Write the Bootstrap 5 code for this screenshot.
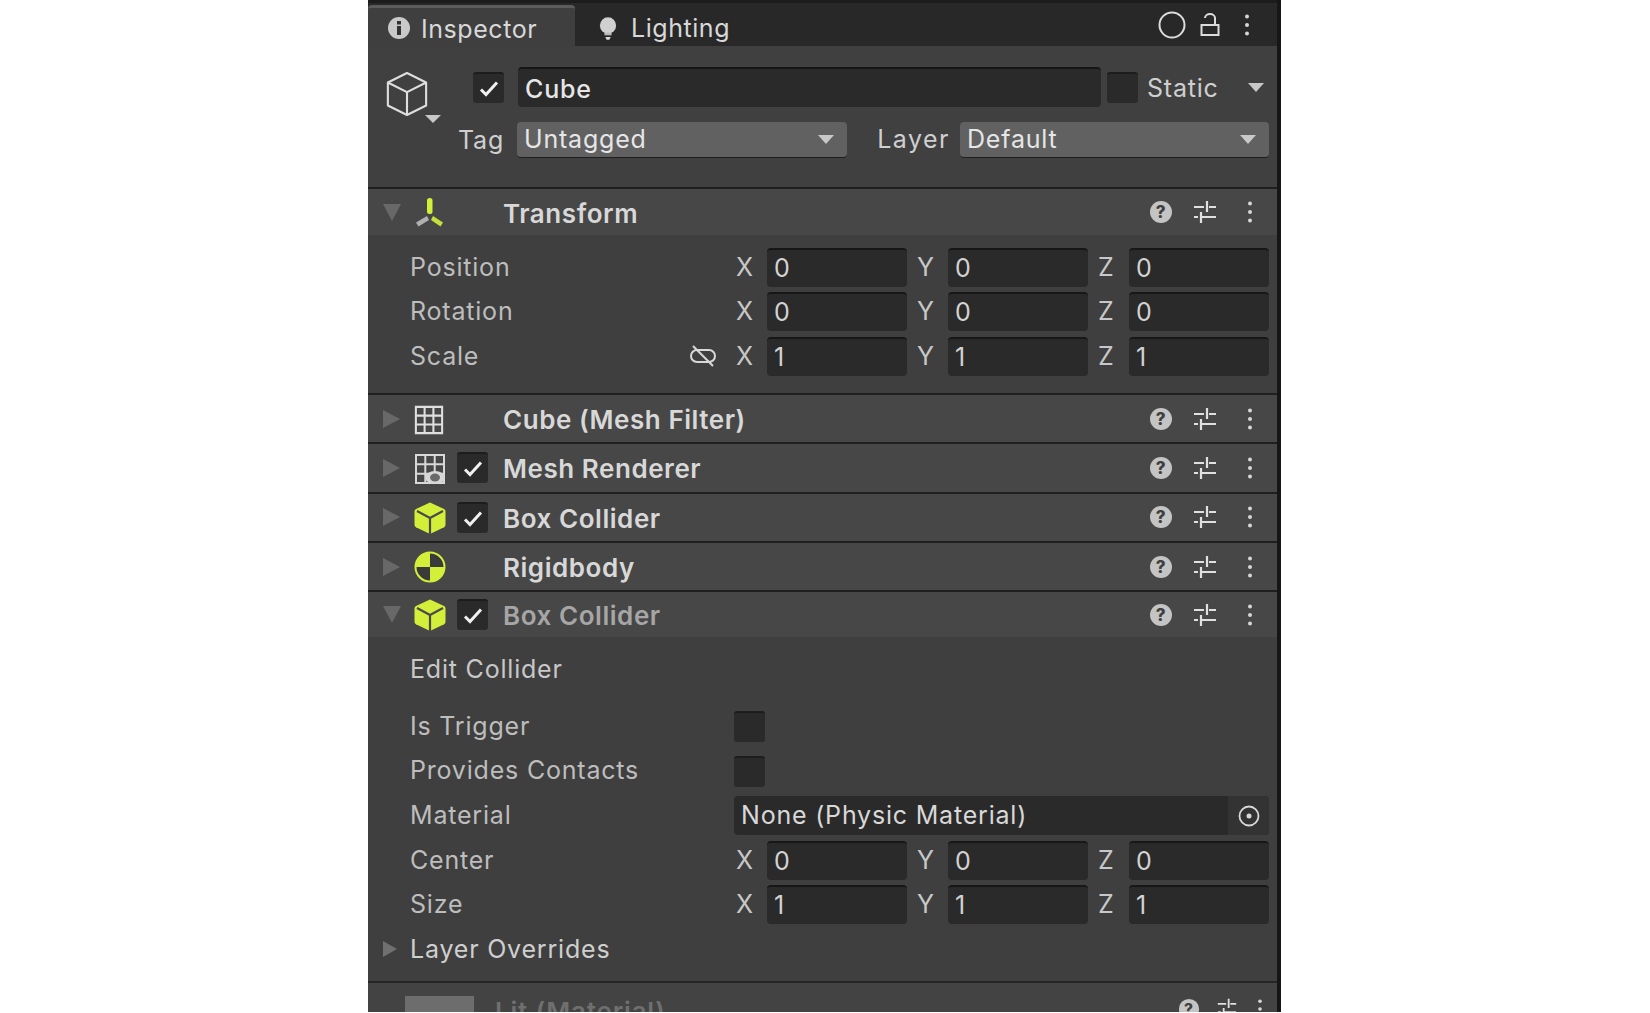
<!DOCTYPE html>
<html lang="en"><head><meta charset="utf-8"><title>Inspector</title>
<link href="https://cdn.jsdelivr.net/npm/bootstrap@5.3.0/dist/css/bootstrap.min.css" rel="stylesheet">
<style>
body{background:#fff;margin:0;overflow:hidden}
.ins-panel{width:913px;height:1012px;margin-left:368px;background:#3f3f3f;border-right:4px solid #161616;overflow:hidden;font-family:Inter,"Liberation Sans",sans-serif;font-size:25px;color:#cfcfcf;letter-spacing:.8px}
.tabbar{height:46px;background:#282828;border-top:3px solid #1c1c1c}
.tab-on{width:207px;height:43px;margin-top:2px;background:#3f3f3f;border-top:3px solid #5c5c5c;border-radius:4px 4px 0 0;padding-left:19px;gap:10px;color:#d8d8d8;letter-spacing:.55px}
.tab-on span{padding-top:4px}
.tab-off{padding-left:24px;padding-top:9px;gap:14px;color:#d8d8d8;letter-spacing:.55px}
.tabicons{margin-left:auto;gap:14px;padding-right:27px}
.dots-m{margin-left:10px}
.headbox{height:143px;background:#404040;border-bottom:2px solid #1e1e1e;padding-top:21px}
.top-line{height:40px}
.sec-line{height:36px;margin-top:15px}
.cubebox{width:105px;padding-left:17px;position:relative}
.cubebox svg{margin-top:14px}
.smalltri{position:absolute;left:57px;top:60px;width:0;height:0;border-left:8px solid transparent;border-right:8px solid transparent;border-top:8px solid #c8c8c8}
.chk{width:31px;height:31px;background:#2a2a2a;border-radius:3px;border-top:2px solid #1d1d1d;flex:none}
.namefield{width:583px;height:40px;margin-left:14px;background:#2a2a2a;border-top:2px solid #161616;border-radius:4px;padding:3px 0 0 7px;font-weight:500;color:#e6e6e6}
.statlabel{padding-top:3px;margin-left:9px}
.statchk{margin-left:6px}
.stat-tri{margin-right:13px}
.dropf{height:36px;background:#616161;border-bottom:1px solid #1e1e1e;border-radius:4px;padding:0 13px 0 7px;color:#e6e6e6}
.dw-tag{width:330px}
.dw-layer{width:309px;margin-left:10px;margin-right:8px}
.layerlbl{letter-spacing:1.500px}
.tri-d{width:0;height:0;border-left:8px solid transparent;border-right:8px solid transparent;border-top:9px solid #c8c8c8}
.tagwrap{width:149px;padding-left:90px;padding-top:2px}
.cmp{height:49.3px;background:#474747;border-bottom:2px solid #1f1f1f;font-weight:600;color:#d8d8d8;font-size:26px;letter-spacing:.55px}
.cmp>span{padding-top:2px}
.cmp-first{height:46px;border-bottom:0}
.cmp-last{height:45px;border-bottom:0}
.arrowcell{width:46px;padding-left:15px}
.tri-r{width:0;height:0;border-top:9px solid transparent;border-bottom:9px solid transparent;border-left:17px solid #686868}
.tri-o{width:0;height:0;border-left:9px solid transparent;border-right:9px solid transparent;border-top:17px solid #686868}
.iconcell{width:43px}
.iconcell svg{margin-bottom:3px}
.chkcell{width:46px}
.rt{margin-left:auto;width:128px;padding-right:24px}
.rt svg{flex:none}
.rt-help{margin-right:20px}
.rt-sl{margin-right:30px}
.dimtext{color:#a6a6a6}
.body-a{height:160px;padding-top:10px;border-bottom:2px solid #1f1f1f}
.frow{height:44.6px;padding-left:42px}
.flabel{width:324px;position:relative;color:#bdbdbd}
.vgroup{width:181px}
.axis{width:33px;padding-left:2px;color:#c8c8c8;font-weight:400}
.numf{width:140px;height:39px;background:#2a2a2a;border-top:2px solid #171717;border-radius:4px;padding-left:7px;color:#d2d2d2;flex:none}
.unlink{position:absolute;right:17px;top:50%;margin-top:-11px}
.editrow{height:44px;margin-top:11px;padding-left:42px;color:#c8c8c8}
.gap-rows{padding-top:12px}
.objf{width:535px;height:39px;background:#2a2a2a;border-radius:4px;padding-left:7px;color:#d8d8d8}
.pickbox{margin-left:auto;width:41px;height:39px;background:#333;border-radius:0 4px 4px 0}
.overrow{height:44.6px;padding-left:15px;color:#cfcfcf;gap:13px}
.tri-r2{width:0;height:0;border-top:8px solid transparent;border-bottom:8px solid transparent;border-left:14px solid #707070}
.sep-end{height:2px;background:#262626;margin-top:9px}
.litrow{height:32px;background:#434343;color:#6f6f6f;overflow:hidden}
.litthumb{width:69px;height:32px;background:#6d6d6d;margin:13px 0 0 37px}
.littxt{margin-left:21px;font-weight:600;font-size:26px;padding-top:16px;line-height:1}
.litic{margin-left:auto;padding:15px 14px 0 0}
.lit-help{margin-right:17px}
.lit-sl{margin-right:20px}
</style></head>
<body>
<svg width="0" height="0" class="d-block position-absolute">
<defs>
<symbol id="i-help" viewBox="0 0 24 24"><circle cx="12" cy="12" r="11" fill="#c4c4c4"/><text x="12" y="18" text-anchor="middle" font-family="Inter,sans-serif" font-weight="800" font-size="17" fill="#3f3f3f">?</text></symbol>
<symbol id="i-sl" viewBox="0 0 24 24"><g stroke="#e0e0e0" stroke-width="2.200" fill="none"><path d="M1 7h10M16 7h7M14 1v11M1 17h4M9 17h14M8 12v11"/></g></symbol>
<symbol id="i-dots" viewBox="0 0 6 24"><circle cx="3" cy="3.500" r="2" fill="#d6d6d6"/><circle cx="3" cy="12" r="2" fill="#d6d6d6"/><circle cx="3" cy="20.500" r="2" fill="#d6d6d6"/></symbol>
<symbol id="i-check" viewBox="0 0 31 31"><path d="M8 16.500l5 5L24 9.500" fill="none" stroke="#f0f0f0" stroke-width="3"/></symbol>
<symbol id="i-grid" viewBox="0 0 32 32"><path d="M2 2h28v28H2zM2 11.300h28M2 20.700h28M11.300 2v28M20.700 2v28" fill="none" stroke="#e0e0e0" stroke-width="2.200"/></symbol>
<symbol id="i-box" viewBox="0 0 32 32"><path d="M16 0.500L30 7q1.500 .7 1.500 2.500V23q0 1.500-1.500 2.300L16 32 2 25.300Q.5 24.500 .5 23V9.500Q.5 7.700 2 7z" fill="#d4ef3a"/><path d="M16 16L3 9M16 16l13-7M16 16v16" stroke="#4a4a4a" stroke-width="2.200" fill="none"/></symbol>
<symbol id="i-rb" viewBox="0 0 32 32"><circle cx="16" cy="16" r="14.500" fill="#3a3a3a" stroke="#d4ef3a" stroke-width="2"/><path d="M16 16V1.500A14.500 14.500 0 0 0 1.500 16zM16 16h14.500A14.500 14.500 0 0 1 16 30.500z" fill="#d4ef3a"/></symbol>
</defs></svg>

<div class="ins-panel">
  <div class="tabbar d-flex">
    <div class="tab-on d-flex align-items-center">
      <svg width="24" height="24" viewBox="0 0 24 24"><circle cx="12" cy="12" r="11" fill="#c9c9c9"/><rect x="10" y="10" width="4" height="9" fill="#333"/><rect x="10" y="5" width="4" height="3.500" fill="#333"/></svg>
      <span>Inspector</span>
    </div>
    <div class="tab-off d-flex align-items-center">
      <svg width="18" height="26" viewBox="0 0 20 28"><circle cx="10" cy="10" r="9" fill="#d0d0d0"/><path d="M6 18h8v3H6z" fill="#bbb"/><path d="M7 23h6l-1.500 3h-3z" fill="#ddd"/></svg>
      <span>Lighting</span>
    </div>
    <div class="tabicons d-flex align-items-center">
      <svg width="28" height="28" viewBox="0 0 28 28"><circle cx="14" cy="14" r="12.500" fill="none" stroke="#dcdcdc" stroke-width="2"/></svg>
      <svg width="20" height="24" viewBox="0 0 20 24"><path d="M1.500 12h17v10h-17zM5 5a5 4 0 0 1 10 0V12" fill="none" stroke="#dcdcdc" stroke-width="2"/></svg>
      <svg class="dots-m" width="6" height="24"><use href="#i-dots"/></svg>
    </div>
  </div>

  <div class="headbox">
    <div class="top-line d-flex align-items-center">
      <div class="cubebox">
        <svg width="44" height="50" viewBox="0 0 46 50"><path d="M23 3L43 13v24L23 47 3 37V13zM3 13l20 10 20-10M23 23v24" fill="none" stroke="#dedede" stroke-width="2.200" stroke-linejoin="round"/></svg>
        <div class="smalltri"></div>
      </div>
      <div class="chk d-flex align-items-center justify-content-center"><svg width="31" height="31"><use href="#i-check"/></svg></div>
      <div class="namefield d-flex align-items-center">Cube</div>
      <div class="chk statchk"></div>
      <span class="statlabel">Static</span>
      <div class="tri-d ms-auto stat-tri"></div>
    </div>
    <div class="sec-line d-flex align-items-center">
      <div class="tagwrap">Tag</div>
      <div class="dropf dw-tag d-flex align-items-center justify-content-between">Untagged<div class="tri-d"></div></div>
      <span class="ms-auto layerlbl">Layer</span>
      <div class="dropf dw-layer d-flex align-items-center justify-content-between">Default<div class="tri-d"></div></div>
    </div>
  </div>

  <div class="cmp cmp-first d-flex align-items-center">
    <div class="arrowcell"><div class="tri-o"></div></div>
    <div class="iconcell"><svg width="32" height="32" viewBox="0 0 32 32"><rect x="13" y="1" width="5.500" height="16" rx="2.500" fill="#d4ef3a"/><path d="M13 19L2 25.500l2.500 4L15 23z" fill="#b0b0b0"/><path d="M19 19l10 6.500-2.500 4L17 23z" fill="#c4de3a"/></svg></div>
    <div class="chkcell"></div>
    <span>Transform</span>
    <div class="rt d-flex align-items-center"><svg class="rt-help" width="24" height="24"><use href="#i-help"/></svg><svg class="rt-sl" width="24" height="24"><use href="#i-sl"/></svg><svg width="6" height="24"><use href="#i-dots"/></svg></div>
  </div>
  <div class="body-a">
    <div class="frow d-flex align-items-center"><div class="flabel">Position</div>
      <div class="vgroup d-flex align-items-center"><div class="axis">X</div><div class="numf d-flex align-items-center">0</div></div>
      <div class="vgroup d-flex align-items-center"><div class="axis">Y</div><div class="numf d-flex align-items-center">0</div></div>
      <div class="vgroup d-flex align-items-center"><div class="axis">Z</div><div class="numf d-flex align-items-center">0</div></div></div>
    <div class="frow d-flex align-items-center"><div class="flabel">Rotation</div>
      <div class="vgroup d-flex align-items-center"><div class="axis">X</div><div class="numf d-flex align-items-center">0</div></div>
      <div class="vgroup d-flex align-items-center"><div class="axis">Y</div><div class="numf d-flex align-items-center">0</div></div>
      <div class="vgroup d-flex align-items-center"><div class="axis">Z</div><div class="numf d-flex align-items-center">0</div></div></div>
    <div class="frow d-flex align-items-center"><div class="flabel">Scale
        <svg class="unlink" width="28" height="22" viewBox="0 0 28 22"><rect x="2" y="5" width="24" height="12" rx="6" fill="none" stroke="#d8d8d8" stroke-width="2"/><path d="M4 1l20 20" stroke="#d8d8d8" stroke-width="2"/></svg></div>
      <div class="vgroup d-flex align-items-center"><div class="axis">X</div><div class="numf d-flex align-items-center">1</div></div>
      <div class="vgroup d-flex align-items-center"><div class="axis">Y</div><div class="numf d-flex align-items-center">1</div></div>
      <div class="vgroup d-flex align-items-center"><div class="axis">Z</div><div class="numf d-flex align-items-center">1</div></div></div>
  </div>

  <div class="cmp d-flex align-items-center">
    <div class="arrowcell"><div class="tri-r"></div></div>
    <div class="iconcell"><svg width="30" height="30"><use href="#i-grid"/></svg></div>
    <div class="chkcell"></div>
    <span>Cube (Mesh Filter)</span>
    <div class="rt d-flex align-items-center"><svg class="rt-help" width="24" height="24"><use href="#i-help"/></svg><svg class="rt-sl" width="24" height="24"><use href="#i-sl"/></svg><svg width="6" height="24"><use href="#i-dots"/></svg></div>
  </div>
  <div class="cmp d-flex align-items-center">
    <div class="arrowcell"><div class="tri-r"></div></div>
    <div class="iconcell"><svg width="32" height="32" viewBox="0 0 32 32"><path d="M2 2h28v28H2zM2 11.300h28M2 20.700h28M11.300 2v28M20.700 2v28" fill="none" stroke="#d8d8d8" stroke-width="2"/><ellipse cx="21" cy="24.500" rx="10" ry="6.500" fill="#d8d8d8"/><ellipse cx="21" cy="24.500" rx="5" ry="4" fill="#6a6a6a"/></svg></div>
    <div class="chkcell"><div class="chk d-flex align-items-center justify-content-center"><svg width="31" height="31"><use href="#i-check"/></svg></div></div>
    <span>Mesh Renderer</span>
    <div class="rt d-flex align-items-center"><svg class="rt-help" width="24" height="24"><use href="#i-help"/></svg><svg class="rt-sl" width="24" height="24"><use href="#i-sl"/></svg><svg width="6" height="24"><use href="#i-dots"/></svg></div>
  </div>
  <div class="cmp d-flex align-items-center">
    <div class="arrowcell"><div class="tri-r"></div></div>
    <div class="iconcell"><svg width="32" height="32"><use href="#i-box"/></svg></div>
    <div class="chkcell"><div class="chk d-flex align-items-center justify-content-center"><svg width="31" height="31"><use href="#i-check"/></svg></div></div>
    <span>Box Collider</span>
    <div class="rt d-flex align-items-center"><svg class="rt-help" width="24" height="24"><use href="#i-help"/></svg><svg class="rt-sl" width="24" height="24"><use href="#i-sl"/></svg><svg width="6" height="24"><use href="#i-dots"/></svg></div>
  </div>
  <div class="cmp d-flex align-items-center">
    <div class="arrowcell"><div class="tri-r"></div></div>
    <div class="iconcell"><svg width="32" height="32"><use href="#i-rb"/></svg></div>
    <div class="chkcell"></div>
    <span>Rigidbody</span>
    <div class="rt d-flex align-items-center"><svg class="rt-help" width="24" height="24"><use href="#i-help"/></svg><svg class="rt-sl" width="24" height="24"><use href="#i-sl"/></svg><svg width="6" height="24"><use href="#i-dots"/></svg></div>
  </div>
  <div class="cmp cmp-last d-flex align-items-center">
    <div class="arrowcell"><div class="tri-o"></div></div>
    <div class="iconcell"><svg width="32" height="32"><use href="#i-box"/></svg></div>
    <div class="chkcell"><div class="chk d-flex align-items-center justify-content-center"><svg width="31" height="31"><use href="#i-check"/></svg></div></div>
    <span class="dimtext">Box Collider</span>
    <div class="rt d-flex align-items-center"><svg class="rt-help" width="24" height="24"><use href="#i-help"/></svg><svg class="rt-sl" width="24" height="24"><use href="#i-sl"/></svg><svg width="6" height="24"><use href="#i-dots"/></svg></div>
  </div>

  <div class="editrow d-flex align-items-center">Edit Collider</div>
  <div class="gap-rows">
    <div class="frow d-flex align-items-center"><div class="flabel">Is Trigger</div><div class="chk"></div></div>
    <div class="frow d-flex align-items-center"><div class="flabel">Provides Contacts</div><div class="chk"></div></div>
    <div class="frow d-flex align-items-center"><div class="flabel">Material</div>
      <div class="objf d-flex align-items-center">None (Physic Material)
        <div class="pickbox d-flex align-items-center justify-content-center"><svg width="22" height="22" viewBox="0 0 22 22"><circle cx="11" cy="11" r="9.500" fill="none" stroke="#d8d8d8" stroke-width="1.800"/><circle cx="11" cy="11" r="2.500" fill="#d8d8d8"/></svg></div></div></div>
    <div class="frow d-flex align-items-center"><div class="flabel">Center</div>
      <div class="vgroup d-flex align-items-center"><div class="axis">X</div><div class="numf d-flex align-items-center">0</div></div>
      <div class="vgroup d-flex align-items-center"><div class="axis">Y</div><div class="numf d-flex align-items-center">0</div></div>
      <div class="vgroup d-flex align-items-center"><div class="axis">Z</div><div class="numf d-flex align-items-center">0</div></div></div>
    <div class="frow d-flex align-items-center"><div class="flabel">Size</div>
      <div class="vgroup d-flex align-items-center"><div class="axis">X</div><div class="numf d-flex align-items-center">1</div></div>
      <div class="vgroup d-flex align-items-center"><div class="axis">Y</div><div class="numf d-flex align-items-center">1</div></div>
      <div class="vgroup d-flex align-items-center"><div class="axis">Z</div><div class="numf d-flex align-items-center">1</div></div></div>
    <div class="overrow d-flex align-items-center"><div class="tri-r2"></div><span>Layer Overrides</span></div>
  </div>
  <div class="sep-end"></div>
  <div class="litrow d-flex">
    <div class="litthumb"></div>
    <div class="littxt">Lit (Material)</div>
    <div class="litic d-flex">
      <svg class="lit-help" width="22" height="22"><use href="#i-help"/></svg>
      <svg class="lit-sl" width="20" height="20"><use href="#i-sl"/></svg>
      <svg width="6" height="22"><use href="#i-dots"/></svg>
    </div>
  </div>
</div>
</body></html>
